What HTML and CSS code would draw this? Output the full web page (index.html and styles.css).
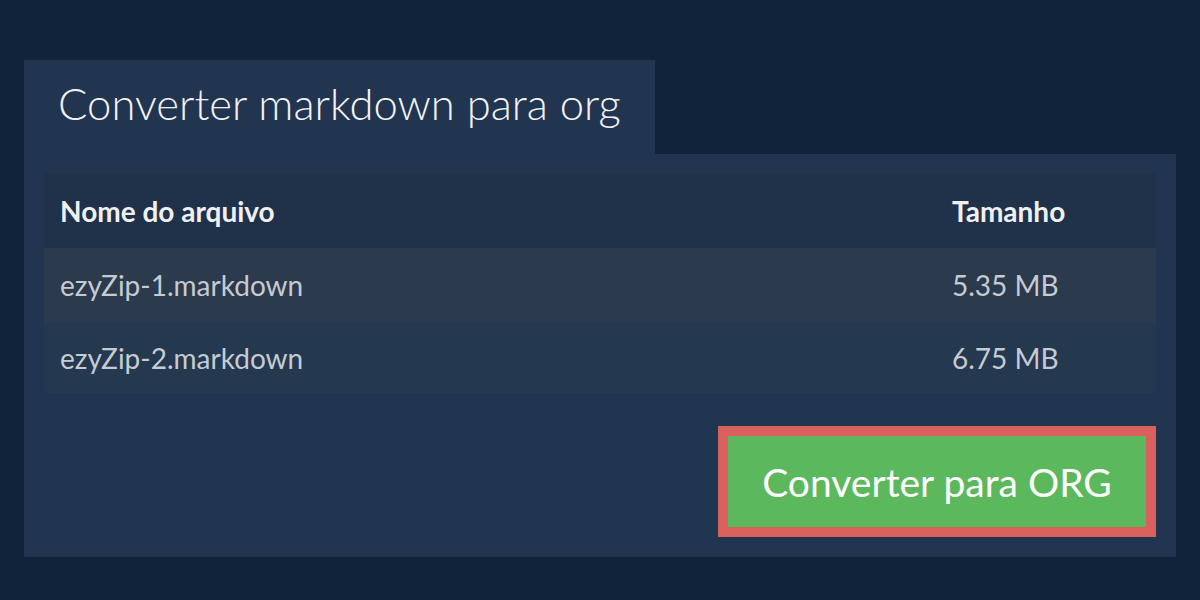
FILE: index.html
```html
<!DOCTYPE html>
<html lang="pt">
<head>
<meta charset="utf-8">
<title>Converter markdown para org</title>
<link rel="stylesheet" href="styles.css">
</head>
<body>
<main class="wrap">
  <div class="tab"><h1 class="title">Converter markdown para org</h1></div>
  <section class="panel">
    <table class="files">
      <thead>
        <tr><th class="c-name">Nome do arquivo</th><th class="c-size">Tamanho</th></tr>
      </thead>
      <tbody>
        <tr class="r1"><td class="c-name">ezyZip-1.markdown</td><td class="c-size">5.35 MB</td></tr>
        <tr class="r2"><td class="c-name">ezyZip-2.markdown</td><td class="c-size">6.75 MB</td></tr>
      </tbody>
    </table>
    <div class="actions">
      <button class="convert">Converter para ORG</button>
    </div>
  </section>
</main>
</body>
</html>
```

FILE: styles.css
```css
html, body {
  margin: 0;
  padding: 0;
  background: #10233a;
  font-family: Lato, "Liberation Sans", sans-serif;
}
.wrap {
  padding: 60px 24px 0 24px;
}
.tab {
  display: inline-block;
  background: #213550;
  height: 94px;
  box-sizing: border-box;
  padding: 0 34px 0 34px;
}
.title {
  margin: 0;
  font-weight: 300;
  font-size: 43.6px;
  line-height: 86px;
  color: #f2f2f2;
}
.panel {
  background: #213550;
  padding: 19px 20px 20px 20px;
}
.files {
  width: 100%;
  border-collapse: collapse;
}
.files th, .files td {
  text-align: left;
  padding: 0 0 0 16px;
  font-size: 28px;
}
.files th {
  height: 75px;
  background: #1f324a;
  color: #f0f0f0;
  font-weight: 700;
}
.files td {
  color: #c6cbd2;
  font-weight: 400;
}
.r1 td { height: 74px; background: #2b3a4c; }
.r2 td { height: 71px; background: #243850; }
.c-size { width: 204px; }
.actions {
  display: flex;
  justify-content: flex-end;
  padding-top: 33px;
}
.convert {
  background: #5cb85c;
  border: 10px solid #d9605c;
  color: #ffffff;
  font-family: Lato, "Liberation Sans", sans-serif;
  font-weight: 400;
  font-size: 39px;
  width: 438px;
  height: 111px;
  padding: 0;
  cursor: pointer;
}
```
